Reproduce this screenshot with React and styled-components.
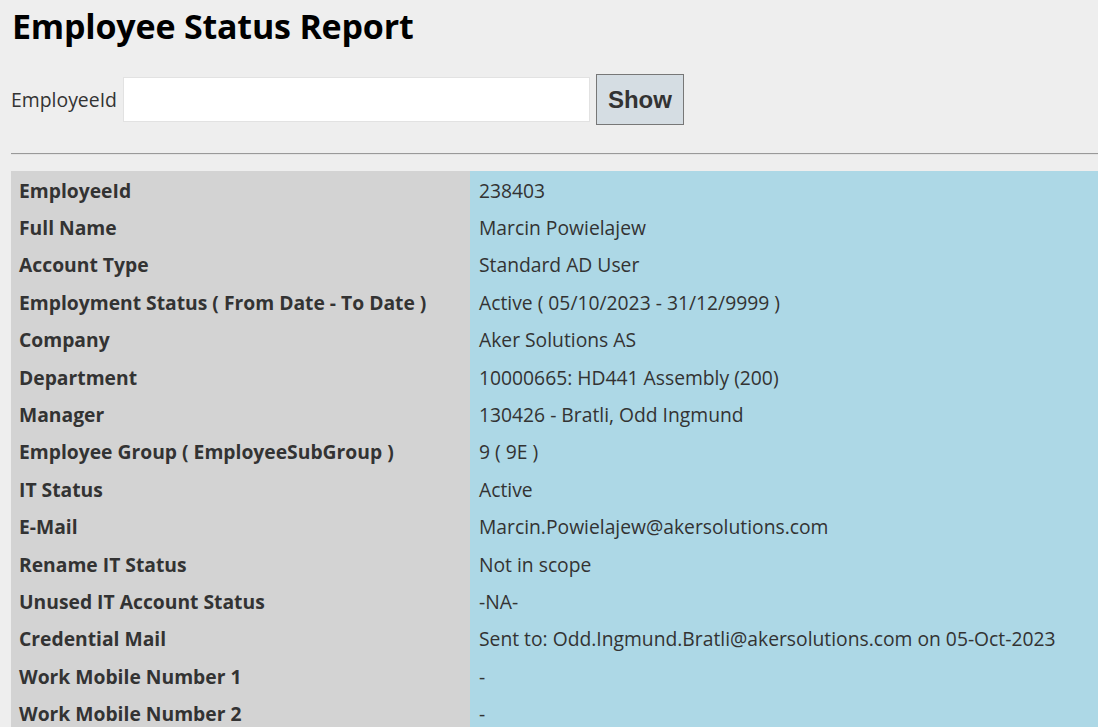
import React, { useState } from "react";
import styled, { createGlobalStyle } from "styled-components";

const GlobalStyle = createGlobalStyle`
  html, body {
    margin: 0;
    background-color: #eeeeee;
    overflow: hidden;
  }
  body {
    font-family: "Open Sans", "Noto Sans", Arial, sans-serif;
    color: #333;
  }
`;

const Page = styled.div`
  padding: 0 0 0 11px;
  width: 1100px;
`;

const Title = styled.h1`
  margin: 0;
  padding: 4px 0 0 1px;
  font-size: 34px;
  line-height: 44px;
  font-weight: 700;
  color: #000;
  letter-spacing: -0.2px;
`;

const SearchForm = styled.form`
  display: flex;
  align-items: center;
  margin-top: 26px;
  height: 51px;
`;

const Label = styled.label`
  font-size: 19.4px;
  margin-right: 6px;
`;

const Input = styled.input`
  box-sizing: border-box;
  width: 467px;
  height: 45px;
  border: 1px solid #e2e2e2;
  background: #fff;
  font-size: 17px;
  padding: 0 8px;
  outline: none;
`;

const ShowButton = styled.button`
  box-sizing: border-box;
  margin-left: 6px;
  width: 88px;
  height: 51px;
  padding: 0;
  background: #d5dde3;
  border: 1px solid #777;
  font-family: "Liberation Sans", Arial, sans-serif;
  font-weight: 700;
  font-size: 24px;
  color: #333;
  cursor: pointer;
`;

const Divider = styled.hr`
  margin: 28px 0 16px 0;
  border: none;
  border-top: 1px solid #999;
  border-bottom: 1px solid #e4e4e4;
`;

const Table = styled.table`
  border-collapse: collapse;
  width: 1100px;
`;

const Row = styled.tr`
  height: 37.4px;
`;

const HeadCell = styled.td`
  width: 459px;
  box-sizing: border-box;
  padding: 1px 8px 0;
  background: #d3d3d3;
  font-weight: 700;
  font-size: 19.3px;
  color: #333;
  white-space: nowrap;
`;

const ValueCell = styled.td`
  padding: 1px 9px 0;
  background: #add8e6;
  font-size: 19.3px;
  color: #333;
  white-space: nowrap;
`;

const rows = [
  ["EmployeeId", "238403"],
  ["Full Name", "Marcin Powielajew"],
  ["Account Type", "Standard AD User"],
  ["Employment Status ( From Date - To Date )", "Active ( 05/10/2023 - 31/12/9999 )"],
  ["Company", "Aker Solutions AS"],
  ["Department", "10000665: HD441 Assembly (200)"],
  ["Manager", "130426 - Bratli, Odd Ingmund"],
  ["Employee Group ( EmployeeSubGroup )", "9 ( 9E )"],
  ["IT Status", "Active"],
  ["E-Mail", "Marcin.Powielajew@akersolutions.com"],
  ["Rename IT Status", "Not in scope"],
  ["Unused IT Account Status", "-NA-"],
  ["Credential Mail", "Sent to: Odd.Ingmund.Bratli@akersolutions.com on 05-Oct-2023"],
  ["Work Mobile Number 1", "-"],
  ["Work Mobile Number 2", "-"],
];

const App = () => {
  const [employeeId, setEmployeeId] = useState("");

  return (
    <Page>
      <GlobalStyle />
      <Title>Employee Status Report</Title>
      <SearchForm onSubmit={(e) => e.preventDefault()}>
        <Label htmlFor="employeeId">EmployeeId</Label>
        <Input id="employeeId" value={employeeId} onChange={(e) => setEmployeeId(e.target.value)} />
        <ShowButton type="submit">Show</ShowButton>
      </SearchForm>
      <Divider />
      <Table>
        <tbody>
          {rows.map(([label, value]) => (
            <Row key={label}>
              <HeadCell>{label}</HeadCell>
              <ValueCell>{value}</ValueCell>
            </Row>
          ))}
        </tbody>
      </Table>
    </Page>
  );
};

export default App;
